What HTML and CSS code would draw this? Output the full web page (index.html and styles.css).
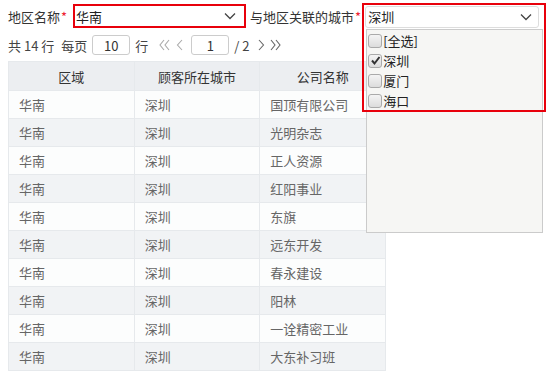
FILE: index.html
```html
<!DOCTYPE html>
<html lang="zh-CN">
<head>
    <meta charset="UTF-8">
    <title>地区客户报表</title>
    <link rel="stylesheet" href="styles.css">
</head>
<body>
    <div class="filters">
        <span class="lbl">地区名称<span class="req">*</span></span>
        <div class="select area">
            <span>华南</span>
            <svg class="chev" width="12" height="8" viewBox="0 0 12 8"><path d="M1 1.5 L6 6.5 L11 1.5" fill="none" stroke="#444" stroke-width="1.3"/></svg>
        </div>
        <span class="lbl">与地区关联的城市<span class="req">*</span></span>
        <div class="combo">
            <div class="select city">
                <span>深圳</span>
                <svg class="chev" width="12" height="8" viewBox="0 0 12 8"><path d="M1 1.5 L6 6.5 L11 1.5" fill="none" stroke="#444" stroke-width="1.3"/></svg>
            </div>
            <ul class="dropdown">
                <li><span class="box"></span>[全选]</li>
                <li><span class="box"><svg width="11" height="11" viewBox="0 0 11 11"><path d="M2 5.5 L4.5 8.5 L9.5 2" fill="none" stroke="#333" stroke-width="2"/></svg></span>深圳</li>
                <li><span class="box"></span>厦门</li>
                <li><span class="box"></span>海口</li>
            </ul>
            <div class="mark"></div>
        </div>
    </div>

    <div class="pager">
        <span>共 14 行</span>
        <span class="gap">每页</span>
        <input class="num" value="10">
        <span>行</span>
        <svg class="arr first" width="11" height="12" viewBox="0 0 11 12"><path d="M5 1 L1 6 L5 11 M10 1 L6 6 L10 11" fill="none" stroke="#aaa" stroke-width="1.1"/></svg>
        <svg class="arr prev" width="7" height="12" viewBox="0 0 7 12"><path d="M6 1 L1.5 6 L6 11" fill="none" stroke="#aaa" stroke-width="1.1"/></svg>
        <input class="num" value="1">
        <span>/ 2</span>
        <svg class="arr next" width="7" height="12" viewBox="0 0 7 12"><path d="M1 1 L5.5 6 L1 11" fill="none" stroke="#666" stroke-width="1.1"/></svg>
        <svg class="arr last" width="11" height="12" viewBox="0 0 11 12"><path d="M1 1 L5 6 L1 11 M6 1 L10 6 L6 11" fill="none" stroke="#666" stroke-width="1.1"/></svg>
    </div>

    <table>
        <thead>
            <tr><th>区域</th><th>顾客所在城市</th><th>公司名称</th></tr>
        </thead>
        <tbody></tbody>
    </table>

    <script>
    const rows = ["国顶有限公司", "光明杂志", "正人资源", "红阳事业", "东旗", "远东开发", "春永建设", "阳林", "一诠精密工业", "大东补习班"];
    const body = document.querySelector("tbody");
    rows.forEach(navn => {
        const tr = document.createElement("tr");
        tr.innerHTML = "<td>华南</td><td>深圳</td><td>" + navn + "</td>";
        body.appendChild(tr);
    });
    </script>
</body>
</html>
```

FILE: styles.css
```css
body{
    margin: 0;
    padding: 4px 8px;
    font-family: "Noto Sans CJK SC", "Noto Sans", sans-serif;
    font-size: 13px;
    color: #333;
    background: #fff;
}

.filters{
    display: flex;
    align-items: center;
    height: 24px;
}

.req{
    color: #e23;
    margin-left: 1px;
}

.select{
    display: flex;
    align-items: center;
    justify-content: space-between;
    box-sizing: border-box;
    color: #222;
}

.area{
    width: 173px;
    height: 24px;
    margin: 0 4px 0 6px;
    padding: 0 8px 0 1px;
    border: 2px solid #e8000b;
}

.combo{
    position: relative;
    margin-left: 4px;
}

.city{
    width: 174px;
    height: 22px;
    margin-top: 1px;
    padding: 0 6px 0 2px;
    border: 1px solid #ddd;
    border-radius: 3px;
}

.dropdown{
    position: absolute;
    left: 1px;
    top: 24px;
    width: 177px;
    height: 204px;
    box-sizing: border-box;
    margin: 0;
    padding: 1px 0 0 1px;
    list-style: none;
    background: #f6f6f4;
    border: 1px solid #cbcbcb;
    z-index: 2;
}

.dropdown li{
    display: flex;
    align-items: center;
    height: 20px;
    color: #222;
}

.box{
    display: inline-flex;
    align-items: center;
    justify-content: center;
    width: 12px;
    height: 12px;
    margin-right: 1px;
    border: 1px solid #aaa;
    border-radius: 3px;
    background: linear-gradient(#f4f4f4, #dcdcdc);
}

.mark{
    position: absolute;
    left: -3px;
    top: -2px;
    width: 184px;
    height: 109px;
    box-sizing: border-box;
    border: 2px solid #e8000b;
    z-index: 3;
}

.pager{
    display: flex;
    align-items: center;
    height: 20px;
    margin-top: 7px;
    color: #444;
}

.gap{
    margin-left: 7px;
}

.num{
    width: 38px;
    height: 20px;
    box-sizing: border-box;
    margin: 0 5px;
    border: 1px solid #ccc;
    border-radius: 3px;
    text-align: center;
    font: inherit;
    color: #333;
    padding: 0;
}

.first{
    margin-left: 11px;
}

.prev{
    margin-left: 6px;
    margin-right: 3px;
}

.next{
    margin-left: 8px;
}

.last{
    margin-left: 5px;
}

table{
    border-collapse: collapse;
    margin-top: 6px;
    width: 378px;
    table-layout: fixed;
}

th, td{
    height: 27px;
    border: 1px solid #e6e9ec;
    padding: 0 10px;
}

th{
    background: #eceef1;
    font-weight: normal;
    color: #333;
    height: 28px;
}

td{
    color: #666;
    text-align: left;
}

tbody tr:nth-child(odd){
    background: #fcfdfd;
}

tbody tr:nth-child(even){
    background: #f1f3f5;
}
```
